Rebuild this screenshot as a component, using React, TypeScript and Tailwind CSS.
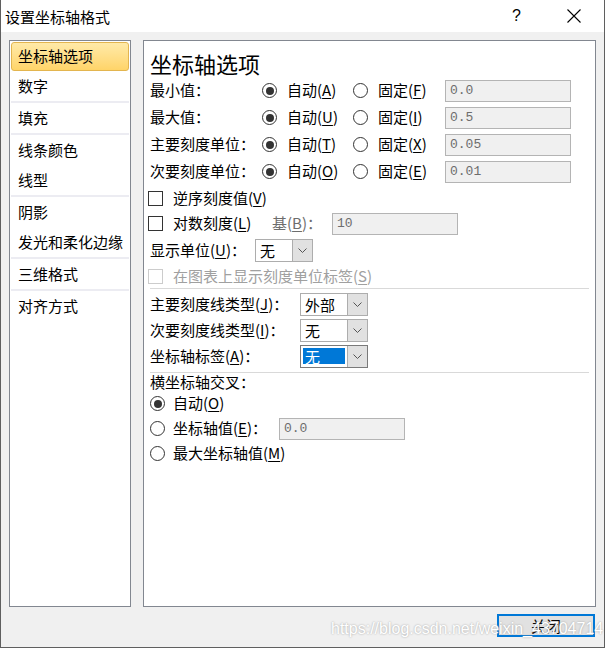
import React from "react";

const cjk = { fontFamily: '"Noto Sans CJK SC", "Noto Sans", sans-serif' };

// underlined access key, e.g. (A)
const K = ({ k }: { k: string }) => (
  <>
    (<u className="underline-offset-2">{k}</u>)
  </>
);

const Radio = ({ checked }: { checked?: boolean }) => (
  <span className="w-[15px] h-[15px] rounded-full border border-[#333] bg-white flex items-center justify-center shrink-0">
    {checked && <span className="w-[8px] h-[8px] rounded-full bg-[#333]" />}
  </span>
);

const Check = ({ disabled }: { disabled?: boolean }) => (
  <span
    className={
      "w-[15px] h-[15px] border bg-white shrink-0 " +
      (disabled ? "border-[#cccccc]" : "border-[#333]")
    }
  />
);

const Field = ({ value, w }: { value: string; w: string }) => (
  <div
    className={
      "h-[22px] border border-[#b4b4b4] bg-[#f0f0f0] flex items-center px-[4px] text-[13px] text-[#6d6d6d] " +
      w
    }
    style={{ fontFamily: '"Liberation Mono", monospace' }}
  >
    {value}
  </div>
);

const Combo = ({ value, w, selected }: { value: string; w: string; selected?: boolean }) => (
  <div className={"h-[23px] flex border bg-white " + (selected ? "border-[#7a7a7a]" : "border-[#adadad]") + " " + w}>
    <div className="flex-1 flex items-center px-[2px]">
      <span
        className={
          "flex-1 h-[16px] flex items-center pl-[2px] leading-none " +
          (selected ? "bg-[#0078d7] text-white" : "text-black")
        }
      >
        {value}
      </span>
    </div>
    <div className="w-[20px] bg-[#e1e1e1] border-l border-[#adadad] flex items-center justify-center">
      <svg width="9" height="5" viewBox="0 0 9 5">
        <path d="M0.5 0.5 L4.5 4.5 L8.5 0.5" fill="none" stroke="#555" strokeWidth="1" />
      </svg>
    </div>
  </div>
);

const AxisRow = ({ label, a, f, value }: { label: string; a: string; f: string; value: string }) => (
  <div className="flex items-center h-[27px]">
    <span className="w-[112px]">{label}</span>
    <div className="w-[91px] flex items-center">
      <Radio checked />
      <span className="ml-[10px]">
        自动<K k={a} />
      </span>
    </div>
    <div className="w-[92px] flex items-center">
      <Radio />
      <span className="ml-[10px]">
        固定<K k={f} />
      </span>
    </div>
    <Field value={value} w="w-[126px]" />
  </div>
);

const navItems: (string | null)[] = [
  "坐标轴选项",
  "数字",
  null,
  "填充",
  null,
  "线条颜色",
  "线型",
  null,
  "阴影",
  "发光和柔化边缘",
  null,
  "三维格式",
  null,
  "对齐方式",
];

export default function App() {
  return (
    <div
      className="relative w-[605px] h-[648px] flex flex-col border-x border-b border-[#5f5f5f] bg-[#f0f0f0] text-[15px] text-black"
      style={cjk}
    >
      {/* title bar */}
      <div className="h-[32px] bg-white flex items-center pl-[4px] shrink-0">
        <span className="flex-1 leading-none">设置坐标轴格式</span>
        <span className="text-[16px] leading-none mr-[46px]" style={{ fontFamily: '"Liberation Sans", sans-serif' }}>
          ?
        </span>
        <svg width="14" height="14" viewBox="0 0 14 14" className="mr-[23px]">
          <path d="M0.5 0.5 L13.5 13.5 M13.5 0.5 L0.5 13.5" stroke="#000" strokeWidth="1.1" />
        </svg>
      </div>

      <div className="flex-1 flex flex-col px-[8px] pt-[8px]">
        <div className="h-[567px] flex gap-[12px]">
          {/* nav list */}
          <div className="w-[122px] border border-[#828790] bg-white p-[1px] pt-0">
            {navItems.map((it, i) =>
              it === null ? (
                <div key={i} className="h-[2px] bg-[#ececf2]" />
              ) : i === 0 ? (
                <div key={i} className="h-[30px] pt-[1px]">
                  <div className="h-[29px] rounded-[3px] border border-[#e3b54f] bg-gradient-to-b from-[#ffeaa8] to-[#ffd468] flex items-center pl-[6px]">
                    {it}
                  </div>
                </div>
              ) : (
                <div key={i} className="h-[30px] flex items-center pl-[7px]">
                  {it}
                </div>
              )
            )}
          </div>

          {/* options panel */}
          <div className="flex-1 border border-[#828790] bg-white pl-[6px] pr-[5px] pt-[8px]">
            <div className="h-[28px] flex items-center text-[22px] leading-none">坐标轴选项</div>
            <AxisRow label="最小值：" a="A" f="F" value="0.0" />
            <AxisRow label="最大值：" a="U" f="I" value="0.5" />
            <AxisRow label="主要刻度单位：" a="T" f="X" value="0.05" />
            <AxisRow label="次要刻度单位：" a="O" f="E" value="0.01" />

            <div className="flex items-center h-[25px] -ml-[2px] mt-[1px]">
              <Check />
              <span className="ml-[10px]">
                逆序刻度值<K k="V" />
              </span>
            </div>
            <div className="flex items-center h-[25px] -ml-[2px]">
              <Check />
              <span className="ml-[10px] w-[99px]">
                对数刻度<K k="L" />
              </span>
              <span className="w-[60px] text-[#6d6d6d]">
                基<K k="B" />：
              </span>
              <Field value="10" w="w-[126px]" />
            </div>
            <div className="flex items-center h-[28px]">
              <span className="w-[105px]">
                显示单位<K k="U" />：
              </span>
              <Combo value="无" w="w-[58px]" />
            </div>
            <div className="flex items-center h-[24px] -ml-[2px] text-[#a0a0a0]">
              <Check disabled />
              <span className="ml-[10px]">
                在图表上显示刻度单位标签<K k="S" />
              </span>
            </div>

            <div className="border-t border-[#d9d9d9] mr-[1px] mt-[0px]" />

            <div className="pt-[2px]">
              <div className="flex items-center h-[26px]">
                <span className="w-[150px]">
                  主要刻度线类型<K k="J" />：
                </span>
                <Combo value="外部" w="w-[68px]" />
              </div>
              <div className="flex items-center h-[26px]">
                <span className="w-[150px]">
                  次要刻度线类型<K k="I" />：
                </span>
                <Combo value="无" w="w-[68px]" />
              </div>
              <div className="flex items-center h-[26px]">
                <span className="w-[150px]">
                  坐标轴标签<K k="A" />：
                </span>
                <Combo value="无" w="w-[68px]" selected />
              </div>
            </div>

            <div className="border-t border-[#d9d9d9] mr-[1px] mt-[3px]" />

            <div className="flex items-center h-[18px]">横坐标轴交叉：</div>
            <div className="flex items-center h-[25px]">
              <Radio checked />
              <span className="ml-[8px]">
                自动<K k="O" />
              </span>
            </div>
            <div className="flex items-center h-[25px]">
              <Radio />
              <span className="ml-[8px] w-[106px]">
                坐标轴值<K k="E" />：
              </span>
              <Field value="0.0" w="w-[126px]" />
            </div>
            <div className="flex items-center h-[25px]">
              <Radio />
              <span className="ml-[8px]">
                最大坐标轴值<K k="M" />
              </span>
            </div>
          </div>
        </div>

        {/* footer */}
        <div className="flex justify-end pr-[1px] mt-[7px]">
          <button className="w-[98px] h-[23px] border-2 border-[#0078d7] bg-[#e1e1e1] flex items-center justify-center leading-none">
            关闭
          </button>
        </div>
      </div>

      {/* watermark */}
      <div
        className="absolute left-[330px] top-[617px] text-[16px] text-white pointer-events-none [text-shadow:0_0_2px_#9a9a9a]"
        style={{ fontFamily: '"Liberation Sans", sans-serif' }}
      >
        https://blog.csdn.net/weixin_43704714
      </div>
    </div>
  );
}
